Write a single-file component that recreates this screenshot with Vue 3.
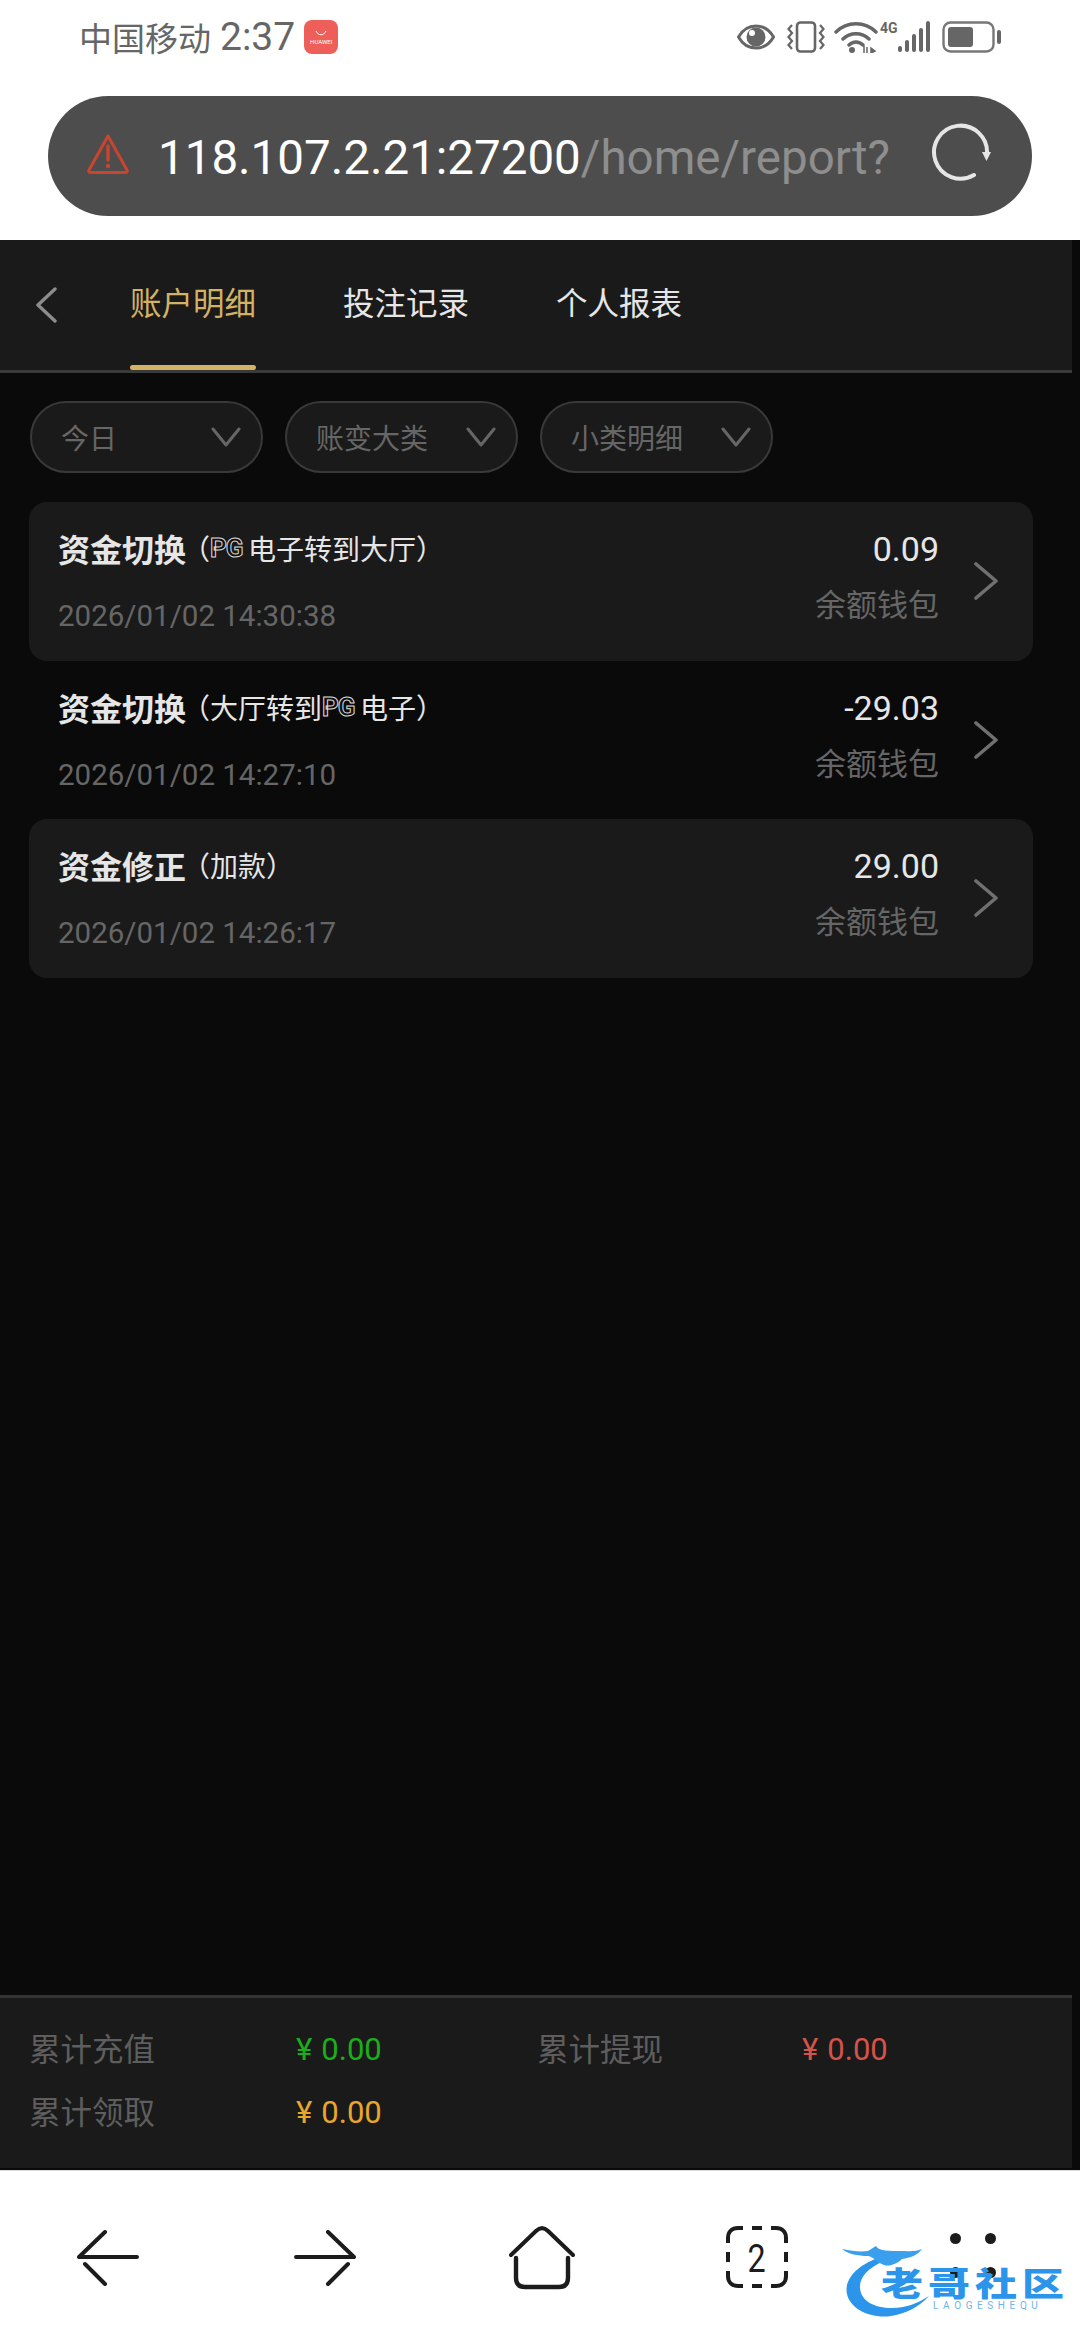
<script setup>
const filters = ["今日", "账变大类", "小类明细"];
const tabs = ["账户明细", "投注记录", "个人报表"];
const records = [
  { title: "资金切换", pre: "（", pg: true, post: "电子转到大厅）", time: "2026/01/02 14:30:38", amount: "0.09", card: true },
  { title: "资金切换", pre: "（大厅转到", pg: true, post: "电子）", time: "2026/01/02 14:27:10", amount: "-29.03", card: false },
  { title: "资金修正", pre: "（加款）", pg: false, post: "", time: "2026/01/02 14:26:17", amount: "29.00", card: true },
];
</script>

<template>
  <div class="page">
    <div class="status">
      <span class="carrier">中国移动</span>
      <span class="clock">2:37</span>
      <div class="huawei">
        <svg width="12" height="6" viewBox="0 0 12 6">
          <path d="M1 1c2 5 8 5 10 0" fill="none" stroke="#fff" stroke-width="1" />
        </svg>
        <span>HUAWEI</span>
      </div>
      <div class="status-right">
        <svg class="eye" width="38" height="26" viewBox="0 0 38 26">
          <path d="M1.5 13C6 5 12 2 19 2s13 3 17.5 11C32 21 26 24 19 24S6 21 1.5 13Z" fill="none" stroke="#666" stroke-width="3" />
          <circle cx="19" cy="13" r="9.5" fill="#666" />
          <circle cx="15" cy="9" r="3" fill="#fff" />
        </svg>
        <svg class="vibrate" width="38" height="32" viewBox="0 0 38 32">
          <rect x="10" y="1.5" width="18" height="29" rx="3.5" fill="none" stroke="#666" stroke-width="2.6" />
          <path d="M5 4 1.5 8 5 12 1.5 16 5 20 1.5 24 5 28M33 4l3.500 4L33 12l3.500 4L33 20l3.500 4L33 28" fill="none" stroke="#666" stroke-width="2.2" />
        </svg>
        <svg class="wifi" width="46" height="32" viewBox="0 0 46 32">
          <path d="M2 11C13 0 31 0 42 11M9 18c7-7 19-7 26 0M15 24c4-4 10-4 14 0" fill="none" stroke="#666" stroke-width="3.4" stroke-linecap="round" />
          <circle cx="18" cy="29" r="3" fill="#666" />
          <path d="M30 25v7M33 26v6M37 27l4 3-4 2Z" fill="#666" stroke="#666" stroke-width="1.5" />
        </svg>
        <span class="net">4G</span>
        <svg class="signal" width="32" height="32" viewBox="0 0 32 32">
          <rect x="0" y="25" width="4" height="6" rx="2" fill="#666" />
          <rect x="7" y="19" width="4" height="12" rx="2" fill="#666" />
          <rect x="14" y="13" width="4" height="18" rx="2" fill="#666" />
          <rect x="21" y="7" width="4" height="24" rx="2" fill="#666" />
          <rect x="28" y="0" width="4" height="31" rx="2" fill="#666" />
        </svg>
        <svg class="battery" width="60" height="32" viewBox="0 0 60 32">
          <rect x="1.5" y="1.5" width="50" height="29" rx="7" fill="none" stroke="#777" stroke-width="2.4" />
          <rect x="6" y="6" width="25" height="20" rx="3" fill="#666" />
          <rect x="55" y="9" width="4" height="14" rx="2" fill="#666" />
        </svg>
      </div>
    </div>

    <div class="urlbar">
      <svg class="warn" width="44" height="42" viewBox="0 0 44 42">
        <path d="M22 3 41 37a1.500 1.500 0 0 1-1 2.500H4A1.500 1.500 0 0 1 3 37Z" fill="none" stroke="#c8452f" stroke-width="3" stroke-linejoin="round" />
        <path d="M22 13v14" stroke="#c8452f" stroke-width="3.4" stroke-linecap="round" />
        <circle cx="22" cy="33" r="2.2" fill="#c8452f" />
      </svg>
      <div class="url"><span class="host">118.107.2.21:27200</span><span class="rest">/home/report?</span></div>
      <svg class="reload" width="62" height="62" viewBox="0 0 62 62">
        <path d="M44 52A26.500 26.500 0 1 1 57 31" fill="none" stroke="#e6e6e6" stroke-width="4" stroke-linecap="round" />
        <path d="M52 29h9l-4.500 9Z" fill="#e6e6e6" />
      </svg>
    </div>

    <div class="content">
      <div class="topbar">
        <svg class="back" width="22" height="36" viewBox="0 0 22 36">
          <path d="M20 2 3 18l17 16" fill="none" stroke="#8c8c8c" stroke-width="3.400" stroke-linecap="round" stroke-linejoin="round" />
        </svg>
        <div class="tabs">
          <div v-for="(t, i) in tabs" :key="t" class="tab" :class="{ active: i === 0 }">{{ t }}</div>
        </div>
      </div>

      <div class="filters">
        <div v-for="f in filters" :key="f" class="filter">
          <span>{{ f }}</span>
          <svg width="30" height="20" viewBox="0 0 30 20">
            <path d="M2 2l13 16L28 2" fill="none" stroke="#666" stroke-width="3" stroke-linecap="round" stroke-linejoin="round" />
          </svg>
        </div>
      </div>

      <div class="list">
        <div v-for="r in records" :key="r.time" class="record" :class="{ card: r.card }">
          <div class="info">
            <div class="title">
              <b>{{ r.title }}</b><span>{{ r.pre }}</span><i v-if="r.pg" class="pg">PG</i><span>{{ r.post }}</span>
            </div>
            <div class="time">{{ r.time }}</div>
          </div>
          <div class="money">
            <div class="amount">{{ r.amount }}</div>
            <div class="wallet">余额钱包</div>
          </div>
          <svg class="more" width="26" height="38" viewBox="0 0 26 38">
            <path d="M3 2l20 17L3 36" fill="none" stroke="#707070" stroke-width="3.600" stroke-linecap="round" stroke-linejoin="round" />
          </svg>
        </div>
      </div>

      <div class="summary">
        <span class="label">累计充值</span>
        <span class="value green"><em>¥</em>0.00</span>
        <span class="label">累计提现</span>
        <span class="value red"><em>¥</em>0.00</span>
        <span class="label">累计领取</span>
        <span class="value orange"><em>¥</em>0.00</span>
      </div>
    </div>

    <div class="nav">
      <svg class="nav-back" width="62" height="56" viewBox="0 0 62 56">
        <path d="M2 27H60M2 27 28 2M8 34l20 20" fill="none" stroke="#1c1c1c" stroke-width="4" stroke-linecap="round" />
      </svg>
      <svg class="nav-forward" width="62" height="56" viewBox="0 0 62 56">
        <path d="M60 27H2M60 27 34 2M54 34 34 54" fill="none" stroke="#1c1c1c" stroke-width="4" stroke-linecap="round" />
      </svg>
      <svg class="nav-home" width="66" height="64" viewBox="0 0 66 64">
        <path d="M2 29 27 5c4-4 8-4 12 0l25 24" fill="none" stroke="#1c1c1c" stroke-width="4" stroke-linecap="round" />
        <path d="M7 32v20c0 6 3 9 9 9h34c6 0 9-3 9-9V32" fill="none" stroke="#1c1c1c" stroke-width="4.400" stroke-linecap="round" />
      </svg>
      <div class="nav-tabs">
        <svg width="62" height="62" viewBox="0 0 62 62">
          <path d="M2 17v-5C2 6 6 2 12 2h5M45 2h5c6 0 10 4 10 10v5M60 45v5c0 6-4 10-10 10h-5M17 60h-5C6 60 2 56 2 50v-5M26 2h10M26 60h10M2 26v10M60 26v10" fill="none" stroke="#1c1c1c" stroke-width="4" />
        </svg>
        <span>2</span>
      </div>
      <div class="nav-menu"><i></i><i></i><i></i><i></i></div>

      <div class="watermark">
        <svg width="110" height="76" viewBox="0 0 110 76">
          <path d="M36 14C14 22 2 36 5 50c3 15 24 25 44 22 14-2 28-9 38-20-12 8-24 12-37 12-18 0-31-7-32-20C17 34 26 24 40 18Z" fill="#2a95ea" />
          <path d="M0 5c10 2 18 3 26 2l8-5c2 4 8 5 22 5 10 0 18 1 24-2-4 6-12 9-20 10-4 4-12 8-18 6-8-3-10-8-16-9C16 12 6 10 0 5Z" fill="#3aa0ee" />
        </svg>
        <div class="wm-name">老哥社区</div>
        <div class="wm-sub">LAOGESHEQU</div>
      </div>
    </div>
  </div>
</template>

<style scoped>
.page {
  position: relative;
  width: 1080px;
  height: 2340px;
  display: flex;
  flex-direction: column;
  overflow: hidden;
  background: #fff;
  font-family: "Noto Sans CJK SC", Roboto, sans-serif;
}

.status {
  height: 70px;
  display: flex;
  align-items: center;
  padding: 4px 78px 0 79px;
  box-sizing: border-box;
  color: #666;
}

.carrier {
  font-size: 33px;
  margin-right: 9px;
}

.clock {
  font-family: Roboto, sans-serif;
  font-size: 39px;
  margin-right: 9px;
}

.huawei {
  width: 34px;
  height: 34px;
  border-radius: 8px;
  background: #ee5f5a;
  color: #fff;
  display: flex;
  flex-direction: column;
  align-items: center;
  justify-content: center;
  gap: 2px;
  overflow: hidden;
}

.huawei span {
  font-family: Roboto, sans-serif;
  font-size: 6px;
  line-height: 7px;
  white-space: nowrap;
}

.status-right {
  margin-left: auto;
  display: flex;
  align-items: center;
}

.eye {
  margin-right: 12px;
}

.vibrate {
  margin-right: 9px;
}

.net {
  font-family: Roboto, sans-serif;
  font-size: 14px;
  font-weight: 700;
  width: 18px;
  margin-bottom: 18px;
}

.signal {
  margin-right: 12px;
}

.urlbar {
  height: 120px;
  margin: 26px 48px 24px;
  padding: 0 42px 0 38px;
  border-radius: 60px;
  background: #4d4d4d;
  display: flex;
  align-items: center;
  box-sizing: border-box;
}

.warn {
  flex: none;
  margin: 0 28px 4px 0;
}

.url {
  width: 730px;
  flex: none;
  margin-top: 4px;
  white-space: nowrap;
  font-family: Roboto, sans-serif;
  font-size: 47.500px;
}

.host {
  color: #fff;
}

.rest {
  color: #8e8e8e;
}

.reload {
  flex: none;
  margin: 0 0 4px 42px;
}

.content {
  flex: 1;
  min-height: 0;
  display: flex;
  flex-direction: column;
  background: #0a0a0a;
}

.topbar {
  width: 1072px;
  height: 133px;
  display: flex;
  align-items: flex-start;
  box-sizing: border-box;
  background: #1a1a1a;
  border-bottom: 3px solid #3a3a3a;
}

.back {
  margin: 47px 0 0 35px;
}

.tabs {
  display: flex;
  gap: 87px;
  margin-left: 73px;
}

.tab {
  position: relative;
  height: 130px;
  font-size: 31.500px;
  line-height: 122px;
  color: #e6e6e6;
}

.tab.active {
  color: #d3b264;
}

.tab.active::after {
  content: "";
  position: absolute;
  left: 0;
  right: 0;
  bottom: 0;
  height: 5px;
  border-radius: 3px;
  background: #d3b264;
}

.filters {
  display: flex;
  gap: 22px;
  padding: 28px 0 29px 30px;
}

.filter {
  width: 233px;
  height: 72px;
  box-sizing: border-box;
  padding: 0 20px 0 29px;
  border: 2px solid #393939;
  border-radius: 36px;
  background: #1a1a1a;
  color: #666;
  font-size: 28px;
  display: flex;
  align-items: center;
  justify-content: space-between;
}

.list {
  flex: 1;
  padding: 0 47px 0 29px;
}

.record {
  height: 158.500px;
  box-sizing: border-box;
  padding: 0 34px 0 29px;
  border-radius: 18px;
  display: flex;
  align-items: center;
}

.record.card {
  background: #1a1a1a;
}

.info {
  flex: 1;
  align-self: flex-start;
}

.title {
  height: 30px;
  margin-top: 31px;
  display: flex;
  align-items: center;
  color: #e6e6e6;
  font-size: 28px;
  white-space: nowrap;
}

.title b {
  font-size: 32px;
  font-weight: 700;
  margin-right: -4px;
}

.pg {
  width: 37px;
  margin: 0 1px 0 0;
  font-family: Roboto, sans-serif;
  font-size: 26px;
  font-style: normal;
  font-weight: 700;
  letter-spacing: -1px;
  color: #111;
  -webkit-text-stroke: 1px #ddd;
}

.time {
  margin-top: 34px;
  height: 38px;
  line-height: 38px;
  font-family: Roboto, sans-serif;
  font-size: 29.500px;
  color: #666;
}

.money {
  align-self: flex-start;
  text-align: right;
  margin-right: 34px;
}

.amount {
  height: 30px;
  margin-top: 32px;
  line-height: 30px;
  font-family: Roboto, sans-serif;
  font-size: 34px;
  color: #e6e6e6;
}

.wallet {
  margin-top: 16px;
  height: 46px;
  line-height: 46px;
  font-size: 31px;
  color: #666;
}

.summary {
  width: 1072px;
  height: 173px;
  flex: none;
  margin-bottom: 2px;
  box-sizing: border-box;
  padding: 19px 0 0 29px;
  background: #1a1a1a;
  border-top: 3px solid #333;
  display: grid;
  grid-template-columns: 267px 241px 265px 1fr;
  grid-auto-rows: 63px;
  align-items: center;
}

.label {
  padding-bottom: 4px;
  font-size: 31.500px;
  color: #5e5e5e;
}

.value {
  padding-top: 2px;
  font-family: Roboto, sans-serif;
  font-size: 31px;
}

.value em {
  font-style: normal;
  margin-right: 9px;
}

.green {
  color: #1cad1c;
}

.red {
  color: #d4534a;
}

.orange {
  color: #e8a62c;
}

.nav {
  position: relative;
  height: 170px;
  flex: none;
  display: flex;
  align-items: flex-start;
  background: #fff;
  border-top: 1px solid #ddd;
  box-sizing: border-box;
}

.nav-back {
  margin: 59px 0 0 77px;
}

.nav-forward {
  margin: 59px 0 0 155px;
}

.nav-home {
  margin: 55px 0 0 153px;
}

.nav-tabs {
  position: relative;
  width: 62px;
  height: 62px;
  margin: 55px 0 0 151px;
  display: flex;
  align-items: center;
  justify-content: center;
  font-family: Roboto, sans-serif;
  font-size: 38px;
  color: #1c1c1c;
}

.nav-tabs svg {
  position: absolute;
  left: 0;
  top: 0;
}

.nav-tabs span {
  display: block;
  margin-top: 3px;
  transform: scaleX(0.85);
}

.nav-menu {
  display: grid;
  grid-template-columns: 11px 11px;
  gap: 23px 24px;
  margin: 62px 0 0 162px;
}

.nav-menu i {
  width: 11px;
  height: 11px;
  border-radius: 50%;
  background: #1c1c1c;
}

.watermark {
  position: absolute;
  left: 842px;
  top: 73px;
  width: 225px;
  height: 80px;
}

.watermark svg {
  position: absolute;
  left: 0;
  top: 0;
}

.wm-name {
  position: absolute;
  left: 39px;
  top: 14px;
  font-size: 42px;
  line-height: 48px;
  font-weight: 900;
  letter-spacing: 5px;
  white-space: nowrap;
  color: #2a95ea;
  transform: scaleY(0.78);
}

.wm-sub {
  position: absolute;
  left: 91px;
  top: 57px;
  font-family: Roboto, sans-serif;
  font-size: 10px;
  line-height: 10px;
  letter-spacing: 4.600px;
  color: #6cb5ec;
}
</style>

<style>
html,
body {
  margin: 0;
  background: #fff;
}
</style>
